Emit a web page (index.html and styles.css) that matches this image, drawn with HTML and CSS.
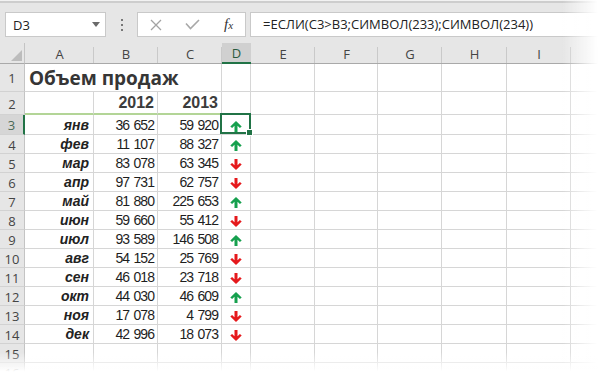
FILE: index.html
```html
<!DOCTYPE html>
<html lang="ru">
<head>
  <meta charset="UTF-8" />
  <title>Объем продаж</title>
  <meta content="width=device-width, initial-scale=1.0" name="viewport" />
  <link rel="stylesheet" href="styles.css">
</head>
<body>
  <div class="toolbar">
    <div class="name-box">
      <span>D3</span>
      <span class="caret"></span>
    </div>
    <div class="grip"><i></i><i></i><i></i></div>
    <div class="fx-buttons">
      <svg width="12" height="12" viewBox="0 0 12 12"><path d="M1 1 L11 11 M11 1 L1 11" stroke="#a3a3a3" stroke-width="1.3" fill="none" /></svg>
      <svg width="15" height="11" viewBox="0 0 15 11"><path d="M1 4.5 L5.5 9.5 L14 1" stroke="#a8a8a8" stroke-width="1.6" fill="none" /></svg>
      <span class="fx">f<span>x</span></span>
    </div>
    <div class="formula">=ЕСЛИ(C3&gt;B3;СИМВОЛ(233);СИМВОЛ(234))</div>
  </div>

  <div class="sheet" id="sheet"></div>

  <div class="fade-right"></div>
  <div class="fade-bottom"></div>

  <script>
    // last column is cut by the window edge, so its letter is left out
    const COLS = ['A', 'B', 'C', 'D', 'E', 'F', 'G', 'H', 'I', ''];

    // month, 2012, 2013, went up?
    const SALES = [
      ['янв', '36 652', '59 920', true],
      ['фев', '11 107', '88 327', true],
      ['мар', '83 078', '63 345', false],
      ['апр', '97 731', '62 757', false],
      ['май', '81 880', '225 653', true],
      ['июн', '59 660', '55 412', false],
      ['июл', '93 589', '146 508', true],
      ['авг', '54 152', '25 769', false],
      ['сен', '46 018', '23 718', false],
      ['окт', '44 030', '46 609', true],
      ['ноя', '17 078', '4 799', false],
      ['дек', '42 996', '18 073', false]
    ];

    const ARROW = '<svg width="12" height="11" viewBox="0 0 12 11"><path d="M6 0 L11.7 5.5 L9.9 7.1 L7.5 4.8 V11 H4.5 V4.8 L2.1 7.1 L0.3 5.5 Z" /></svg>';

    function cell(cls, text) {
      return `<div class="cell ${cls}">${text || ''}</div>`;
    }

    function blanks(count) {
      return Array(count).fill(cell('')).join('');
    }

    function rowHead(n, active) {
      return `<div class="row-head ${active ? 'active' : ''}">${n}</div>`;
    }

    function renderSheet() {
      let html = `<div class="corner"><svg width="11" height="11" viewBox="0 0 11 11"><path d="M11 0 V11 H0 Z" fill="#bcbcbc" /></svg></div>`;
      html += COLS.map(c => `<div class="col-head ${c === 'D' ? 'active' : ''}">${c}</div>`).join('');

      html += rowHead(1) + '<div class="cell title">Объем продаж</div>' + blanks(7);
      html += rowHead(2) + cell('under') + cell('under year', '2012') + cell('under year', '2013') + blanks(7);

      SALES.forEach((row, i) => {
        const n = i + 3;
        html += rowHead(n, n === 3)
          + cell('month', row[0])
          + cell('num', row[1])
          + cell('num', row[2])
          + cell(`arrow ${row[3] ? 'up' : 'down'} ${n === 3 ? 'selected' : ''}`, ARROW)
          + blanks(6);
      });

      [15, 16].forEach(n => { html += rowHead(n) + blanks(10); });

      document.getElementById('sheet').innerHTML = html;
    }

    renderSheet();
  </script>
</body>
</html>
```

FILE: styles.css
```css
body { margin: 0; background: #fff; width: 598px; height: 374px; overflow: hidden; font-family: "Open Sans", "Noto Sans", sans-serif; }

/* formula bar */
.toolbar {
  display: flex;
  align-items: flex-start;
  height: 43px;
  box-sizing: border-box;
  padding-top: 12px;
  background: linear-gradient(#f2f2f2 0 1px, #cdcdcd 1px 3px, #e6e6e6 3px);
}

.name-box {
  display: flex;
  align-items: center;
  justify-content: space-between;
  margin-left: 5px;
  width: 101px;
  height: 25px;
  box-sizing: border-box;
  padding: 0 5px 0 7px;
  background: #fff;
  border: 1px solid #c9c9c9;
  font-size: 13px;
  color: #222;
}

.caret {
  width: 0;
  height: 0;
  border-top: 5px solid #6a6a6a;
  border-left: 4px solid transparent;
  border-right: 4px solid transparent;
}

.grip {
  width: 31px;
  height: 25px;
  display: flex;
  flex-direction: column;
  align-items: center;
  justify-content: center;
  gap: 3px;
}

.grip i { display: block; width: 2px; height: 2px; background: #777; }

.fx-buttons {
  display: grid;
  grid-template-columns: 36px 36px 37px;
  align-items: center;
  justify-items: center;
  width: 109px;
  height: 25px;
  box-sizing: border-box;
  background: #fff;
  border: 1px solid #c9c9c9;
}

.fx {
  font-family: "Liberation Serif", serif;
  font-style: italic;
  font-size: 15px;
  color: #333;
}

.fx span { font-size: 11px; }

.formula {
  flex: 1;
  margin-left: 4px;
  height: 25px;
  box-sizing: border-box;
  padding-left: 12px;
  line-height: 23px;
  background: #fff;
  border: 1px solid #c9c9c9;
  border-right: none;
  font-size: 13px;
  color: #222;
  white-space: nowrap;
}

/* worksheet */
.sheet {
  display: grid;
  grid-template-columns: 25px 69px 64px 64px 29px 64px 63px 64px 65px 64px 27px;
  grid-template-rows: 21px 28px 23px 20px repeat(11, 19px) 19px 19px;
}

.corner, .col-head, .row-head {
  background: #e6e6e6;
  color: #444;
  font-size: 13px;
  box-sizing: border-box;
}

.corner {
  display: flex;
  align-items: flex-end;
  justify-content: flex-end;
  padding: 0 2px 2px 0;
  border-bottom: 1px solid #a9a9a9;
  border-right: 1px solid #c4c4c4;
}

.col-head {
  display: flex;
  align-items: flex-end;
  justify-content: center;
  line-height: 18px;
  border-bottom: 1px solid #a9a9a9;
  background: linear-gradient(#c9c9c9, #c9c9c9) right bottom / 1px 16px no-repeat, #e6e6e6;
}

.col-head.active {
  background: #d0d0d0;
  border-bottom: 2px solid #217346;
  color: #2a5a3e;
}

.row-head {
  display: flex;
  align-items: center;
  justify-content: center;
  padding-top: 1px;
  border-right: 1px solid #c4c4c4;
  border-bottom: 1px solid #d2d2d2;
}

.row-head.active {
  background: #d6d6d6;
  border-right: 2px solid #217346;
  color: #4b6a57;
}

.cell {
  display: flex;
  align-items: center;
  justify-content: flex-end;
  box-sizing: border-box;
  padding-right: 3px;
  border-right: 1px solid #d6d6d6;
  border-bottom: 1px solid #d6d6d6;
  font-family: "Liberation Sans", Arial, sans-serif;
  font-size: 13px;
  color: #222;
  white-space: nowrap;
}

.title {
  grid-column: span 3;
  justify-content: flex-start;
  padding-left: 4px;
  font-family: "Open Sans", "Noto Sans", sans-serif;
  font-weight: bold;
  font-size: 19px;
  color: #363636;
}

.under { border-bottom: 2px solid #b3d597; }

.year { font-weight: bold; font-size: 16px; color: #3c3c3c; }

.month { padding-right: 4px; font-weight: bold; font-style: italic; font-size: 14px; }

.num { font-size: 14px; letter-spacing: -0.95px; word-spacing: 1.5px; color: #1e1e1e; }

.arrow { justify-content: center; padding: 3px 0 0; }
.arrow.up svg { fill: #16a04e; }
.arrow.down svg { fill: #e5191c; transform: rotate(180deg); }

.selected { position: relative; }

.selected::after {
  content: '';
  position: absolute;
  left: -2px;
  top: -2px;
  right: -1px;
  bottom: 0;
  border: 2px solid #217346;
}

.selected::before {
  content: '';
  position: absolute;
  right: -3px;
  bottom: -2px;
  width: 5px;
  height: 5px;
  background: #217346;
  border: 1px solid #fff;
  z-index: 1;
}

/* soft edges of the screenshot */
.fade-right {
  position: fixed;
  top: 0;
  right: 0;
  width: 36px;
  height: 100%;
  background: linear-gradient(to right, rgba(255,255,255,0), #fff);
}

.fade-bottom {
  position: fixed;
  left: 0;
  bottom: 0;
  width: 100%;
  height: 22px;
  background: linear-gradient(rgba(255,255,255,0), #fff 90%);
}
```
